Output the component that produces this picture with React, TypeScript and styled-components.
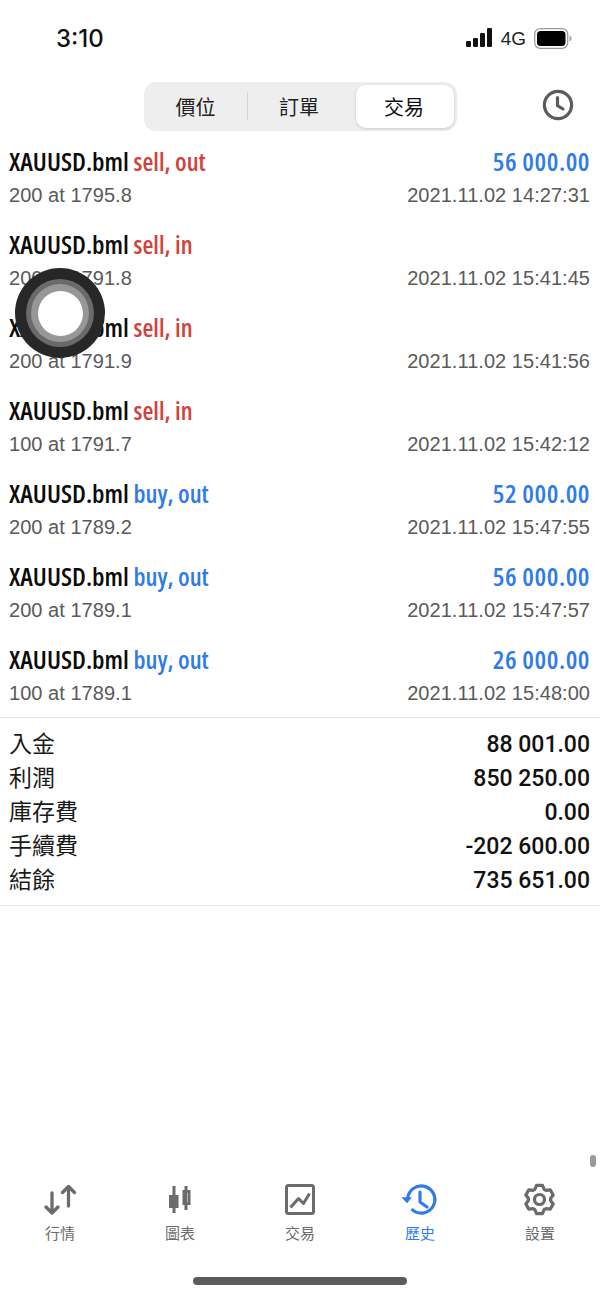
import React from "react";
import styled, { createGlobalStyle } from "styled-components";

const Global = createGlobalStyle`
  html, body { margin: 0; padding: 0; background: #fff; }
  body { font-family: "Liberation Sans", "Noto Sans CJK TC", sans-serif; }
`;
const Screen = styled.div`
  position: relative; width: 600px; height: 1298px; overflow: hidden; background: #fff;
  display: flex; flex-direction: column;
`;
const StatusBar = styled.div`
  height: 76px; flex: none; display: flex; align-items: center; justify-content: space-between;
  padding: 2px 28px 0 56px; box-sizing: border-box;
`;
const Time = styled.div`
  font: 500 24px/1 Inter, "Liberation Sans", sans-serif; color: #111;
`;
const StatusRight = styled.div`
  display: flex; align-items: center; gap: 8px; margin-bottom: 2px; font: 400 19px/1 "Liberation Sans", sans-serif; color: #222;
`;
const NavBar = styled.div`
  height: 60px; flex: none; box-sizing: border-box; padding: 6px 26px 0 144px;
  display: flex; justify-content: space-between; align-items: flex-start;
`;
const Segments = styled.div`
  width: 313px; height: 49px; box-sizing: border-box; padding: 3px; border-radius: 12px;
  background: #eeeeee; display: grid; grid-template-columns: 101px 104px 1fr; align-items: center;
`;
const Segment = styled.div<{ $active?: boolean; $divider?: boolean }>`
  height: 43px; display: flex; align-items: center; justify-content: center;
  font: 400 20px/1 "Noto Sans CJK TC", sans-serif; color: #222; position: relative;
  padding-right: 2px;
  ${(p) => p.$active && `margin-left:4px;background:#fff;border-radius:10px;box-shadow:0 1px 3px rgba(0,0,0,.15);color:#111;`}
  ${(p) => p.$divider && `padding-right:4px;&::after{content:"";position:absolute;right:0;top:7px;height:28px;width:1px;background:#d4d4d4;}`}
`;
const HistoryBtn = styled.div`
  width: 32px; height: 32px; margin-top: 7px; color: #5c5c5c;
`;
const Trades = styled.div`
  flex: none; padding-top: 9px;
`;
const Row = styled.div`
  height: 83px; box-sizing: border-box; padding: 0 10px 0 9px;
`;
const RowLine = styled.div`
  display: flex; justify-content: space-between; align-items: center;
`;
const TopLine = styled(RowLine)`
  height: 33px; margin-bottom: 2px;
`;
const SubLine = styled(RowLine)`
  height: 30px; font: 400 20px/30px "Liberation Sans", sans-serif; color: #5a5a5a; letter-spacing: 0.04px;
`;
const Title = styled.div`
  font: 600 26px/33px "Open Sans", sans-serif; font-stretch: 80%;
  white-space: nowrap; color: #0c0c0c;
`;
const Side = styled.span<{ $buy: boolean }>`
  font-size: 25px;
  color: ${(p) => (p.$buy ? "#2f7bea" : "#d1423a")};
`;
const Profit = styled.div`
  font: 600 26px/33px "Open Sans", sans-serif; font-stretch: 80%; letter-spacing: 0.55px;
  white-space: nowrap; color: #2f7bea;
`;
const Summary = styled.div`
  margin-top: -9px; border-top: 1px solid #e6e6e6; border-bottom: 1px solid #e6e6e6; padding: 7px 10px 10px 9px;
`;
const SummaryRow = styled.div`
  height: 34px; display: flex; justify-content: space-between; align-items: center;
  font: 400 23px/34px "Noto Sans CJK TC", sans-serif; color: #1a1a1a;
`;
const SummaryValue = styled.span`
  font: 500 23px/34px Roboto, "Liberation Sans", sans-serif; color: #111; padding-top: 6px;
`;
const TabBar = styled.div`
  position: absolute; left: 0; right: 0; top: 1183px; display: grid; grid-template-columns: repeat(5, 120px);
`;
const Tab = styled.div<{ $active?: boolean }>`
  display: flex; flex-direction: column; align-items: center; gap: 6px;
  color: ${(p) => (p.$active ? "#2f7bea" : "#6b6b6b")};
  font: 400 15px/20px "Noto Sans CJK TC", sans-serif;
`;
const TabIcon = styled.svg`
  width: 34px; height: 34px; display: block; overflow: visible;
`;
const HomeBar = styled.div`
  position: absolute; left: 193px; top: 1277px; width: 214px; height: 8px; border-radius: 4px; background: #5c5c5c;
`;
const ScrollThumb = styled.div`
  position: absolute; left: 590px; top: 1155px; width: 6px; height: 12px; border-radius: 3px; background: #9a9a9a;
`;
const Assistive = styled.div`
  position: absolute; left: 15px; top: 268px; width: 90px; height: 90px; border-radius: 50%;
  background: #272727; display: flex; align-items: center; justify-content: center;
`;
const AssistiveMid = styled.div`
  width: 68px; height: 68px; border-radius: 50%; background: #6a6a6a; display: flex; align-items: center; justify-content: center;
`;
const AssistiveInner = styled.div`
  width: 58px; height: 58px; border-radius: 50%; background: #979797; display: flex; align-items: center; justify-content: center;
`;
const AssistiveCore = styled.div`
  width: 45px; height: 45px; border-radius: 50%; background: #fff;
`;

const trades = [
  ["sell, out", "56 000.00", "200 at 1795.8", "14:27:31"],
  ["sell, in", "", "200 at 1791.8", "15:41:45"],
  ["sell, in", "", "200 at 1791.9", "15:41:56"],
  ["sell, in", "", "100 at 1791.7", "15:42:12"],
  ["buy, out", "52 000.00", "200 at 1789.2", "15:47:55"],
  ["buy, out", "56 000.00", "200 at 1789.1", "15:47:57"],
  ["buy, out", "26 000.00", "100 at 1789.1", "15:48:00"],
];
const summary = [
  ["入金", "88 001.00"],
  ["利潤", "850 250.00"],
  ["庫存費", "0.00"],
  ["手續費", "-202 600.00"],
  ["結餘", "735 651.00"],
];

const gearPath = (() => {
  const c = 16.5;
  const pt = (deg: number, r: number) => {
    const a = (deg * Math.PI) / 180;
    return `${(c + r * Math.cos(a)).toFixed(2)} ${(c + r * Math.sin(a)).toFixed(2)}`;
  };
  const parts: string[] = [];
  for (let k = 0; k < 6; k++) {
    const a = -90 + 60 * k;
    parts.push(pt(a - 24, 11.2), pt(a - 12, 14.4), pt(a + 12, 14.4), pt(a + 24, 11.2));
  }
  return `M${parts.join("L")}Z`;
})();

const Signal = () => (
  <svg width="27" height="20" viewBox="0 0 27 20" fill="#111">
    <rect x="0" y="13" width="5" height="6" rx="1.2" />
    <rect x="7" y="10" width="5" height="9" rx="1.2" />
    <rect x="14" y="5" width="5" height="14" rx="1.2" />
    <rect x="21" y="0" width="5" height="19" rx="1.2" />
  </svg>
);
const Battery = () => (
  <svg width="38" height="21" viewBox="0 0 38 21">
    <rect x="0.7" y="0.7" width="33" height="19.6" rx="5.500" fill="none" stroke="#9a9a9a" strokeWidth="1.3" />
    <rect x="3" y="3" width="28.500" height="15" rx="3.500" fill="#000" />
    <path d="M35.500 7.500c1.300.5 2 1.700 2 3s-.7 2.500-2 3z" fill="#a5a5a5" />
  </svg>
);
const Clock = () => (
  <svg viewBox="0 0 32 32" width="32" height="32" fill="none" stroke="currentColor" strokeWidth="3.2" strokeLinecap="round" strokeLinejoin="round">
    <circle cx="16" cy="16" r="13.6" />
    <path d="M15.5 8.5v8.2l5.5 3.3" />
  </svg>
);

const tabs = [
  {
    label: "行情",
    icon: (
      <g fill="none" stroke="currentColor" strokeWidth="3.300" strokeLinecap="round" strokeLinejoin="round">
        <path d="M9 10v20M3 24l6 6 6-6" />
        <path d="M25.500 23V3.500M19.500 9.500l6-6 6 6" />
      </g>
    ),
  },
  {
    label: "圖表",
    icon: (
      <g fill="currentColor">
        <rect x="9.500" y="3" width="3" height="27" />
        <rect x="6" y="12" width="9.500" height="13" />
        <rect x="21.500" y="3" width="3" height="24" />
        <path fillRule="evenodd" d="M19.500 7h8v15h-8zM22 9.800v9.400h3V9.800z" />
      </g>
    ),
  },
  {
    label: "交易",
    icon: (
      <g fill="none" stroke="currentColor" strokeLinejoin="round">
        <rect x="3.500" y="2.500" width="27" height="28" rx="2" strokeWidth="3" />
        <path d="M7.500 24.500l8-9 5 5 6-10" strokeWidth="3" />
      </g>
    ),
  },
  {
    label: "歷史",
    active: true,
    icon: (
      <g fill="none" stroke="currentColor" strokeWidth="3.200" strokeLinejoin="round">
        <path d="M4.700 15.500A13.600 13.600 0 1 1 8.500 26" />
        <path d="M-1 14.500h9.500l-4.500 5.500z" fill="currentColor" strokeWidth="0.500" />
        <path d="M17 9v10l7 5" strokeLinecap="round" />
      </g>
    ),
  },
  {
    label: "設置",
    icon: (
      <g fill="none" stroke="currentColor" strokeWidth="3.200" strokeLinejoin="round">
        <path d={gearPath} />
        <circle cx="16.500" cy="16.500" r="5" />
      </g>
    ),
  },
];

export default function App() {
  return (
    <Screen>
      <Global />
      <StatusBar>
        <Time>3:10</Time>
        <StatusRight>
          <Signal />
          <span>4G</span>
          <Battery />
        </StatusRight>
      </StatusBar>
      <NavBar>
        <Segments>
          <Segment $divider>價位</Segment>
          <Segment>訂單</Segment>
          <Segment $active>交易</Segment>
        </Segments>
        <HistoryBtn>
          <Clock />
        </HistoryBtn>
      </NavBar>
      <Trades>
        {trades.map((t, i) => (
          <Row key={i}>
            <TopLine>
              <Title>
                XAUUSD.bml <Side $buy={t[0].startsWith("buy")}>{t[0]}</Side>
              </Title>
              {t[1] && <Profit>{t[1]}</Profit>}
            </TopLine>
            <SubLine>
              <span>{t[2]}</span>
              <span>2021.11.02 {t[3]}</span>
            </SubLine>
          </Row>
        ))}
      </Trades>
      <Summary>
        {summary.map(([k, v]) => (
          <SummaryRow key={k}>
            <span>{k}</span>
            <SummaryValue>{v}</SummaryValue>
          </SummaryRow>
        ))}
      </Summary>
      <ScrollThumb />
      <TabBar>
        {tabs.map((t) => (
          <Tab key={t.label} $active={t.active}>
            <TabIcon viewBox="0 0 34 34">{t.icon}</TabIcon>
            {t.label}
          </Tab>
        ))}
      </TabBar>
      <HomeBar />
      <Assistive>
        <AssistiveMid>
          <AssistiveInner>
            <AssistiveCore />
          </AssistiveInner>
        </AssistiveMid>
      </Assistive>
    </Screen>
  );
}
